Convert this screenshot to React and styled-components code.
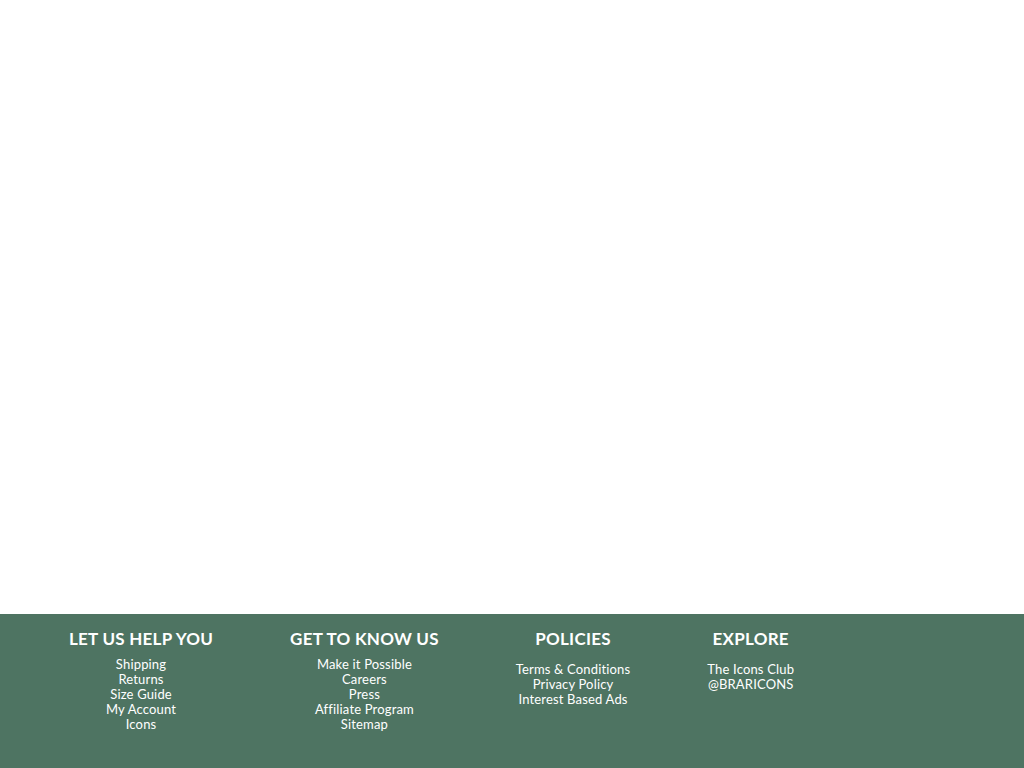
import styled, { createGlobalStyle } from 'styled-components';

const GlobalStyle = createGlobalStyle`
  html, body {
    margin: 0;
    padding: 0;
    background: #ffffff;
  }
  body {
    font-family: 'Lato', 'Liberation Sans', sans-serif;
  }
`;

const Page = styled.div`
  min-height: 100vh;
  display: flex;
  flex-direction: column;
`;

const Main = styled.main`
  flex: 1;
`;

const Footer = styled.footer`
  height: 154px;
  box-sizing: border-box;
  background: #4e7462;
  color: #ffffff;
  display: flex;
  align-items: flex-start;
  gap: 77px;
  padding: 14px 0 0 69px;
`;

const Column = styled.div`
  display: flex;
  flex-direction: column;
  align-items: center;
  text-align: center;
`;

const Heading = styled.h3`
  margin: 0;
  font-size: 17px;
  font-weight: 700;
  line-height: 22px;
  letter-spacing: 0.25px;
  white-space: nowrap;
`;

const Links = styled.ul`
  list-style: none;
  margin: ${({ offset }) => 7 + (offset || 0)}px 0 0;
  padding: 0;
`;

const Link = styled.li`
  font-size: 13px;
  line-height: 15px;
  letter-spacing: 0.17px;
  white-space: nowrap;
`;

const columns = [
  { title: 'LET US HELP YOU', links: ['Shipping', 'Returns', 'Size Guide', 'My Account', 'Icons'] },
  { title: 'GET TO KNOW US', links: ['Make it Possible', 'Careers', 'Press', 'Affiliate Program', 'Sitemap'] },
  { title: 'POLICIES', links: ['Terms & Conditions', 'Privacy Policy', 'Interest Based Ads'], offset: 5 },
  { title: 'EXPLORE', links: ['The Icons Club', '@BRARICONS'], offset: 5 },
];

export default function App() {
  return (
    <Page>
      <GlobalStyle />
      <Main />
      <Footer>
        {columns.map((col) => (
          <Column key={col.title}>
            <Heading>{col.title}</Heading>
            <Links offset={col.offset}>
              {col.links.map((l) => (
                <Link key={l}>{l}</Link>
              ))}
            </Links>
          </Column>
        ))}
      </Footer>
    </Page>
  );
}
